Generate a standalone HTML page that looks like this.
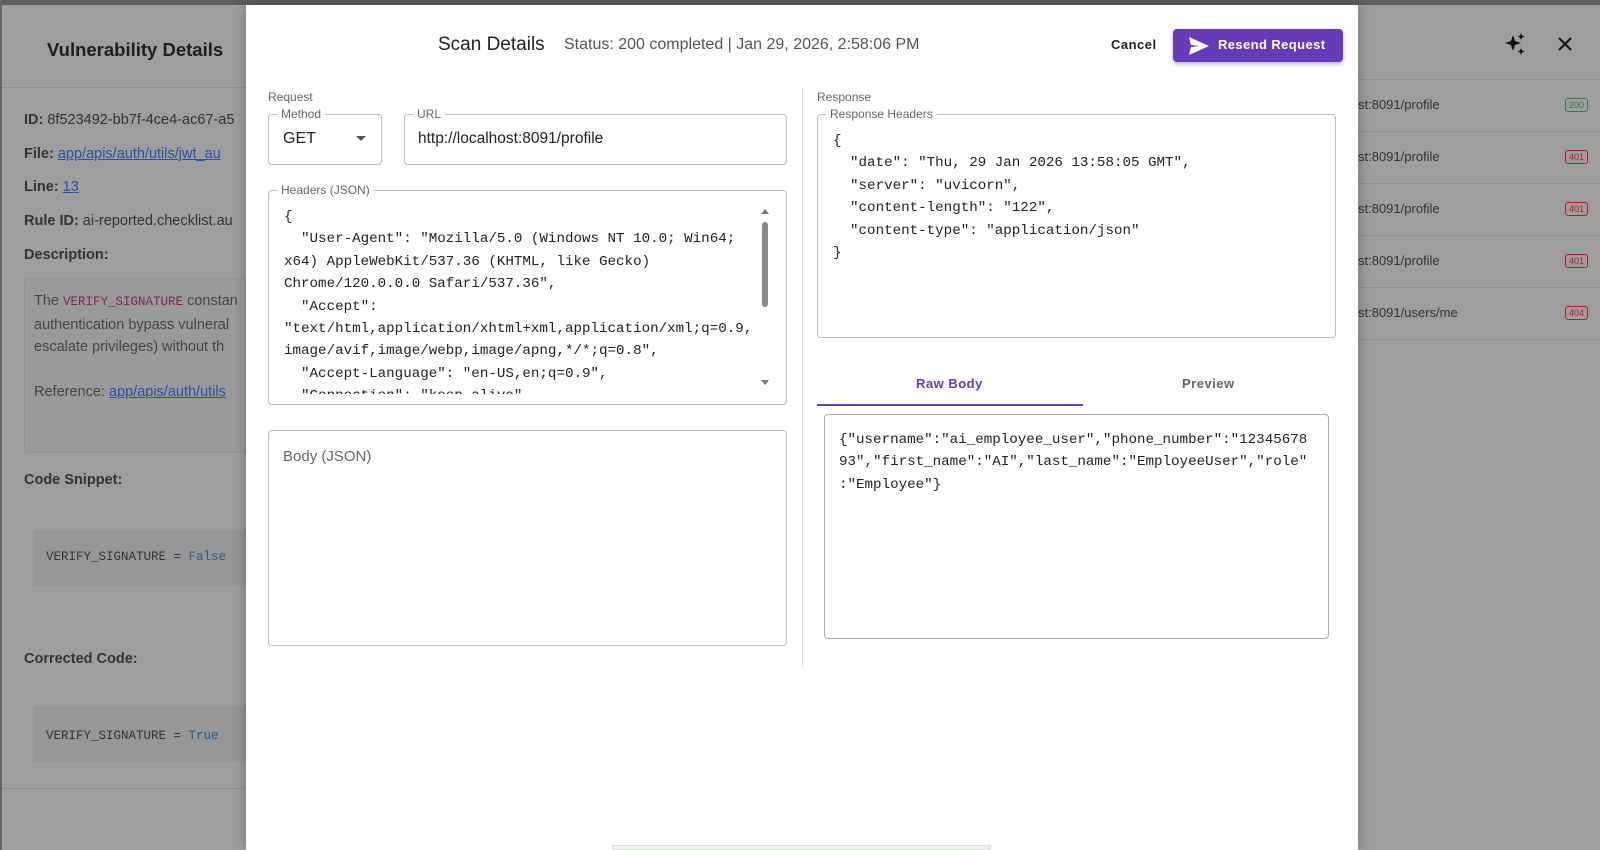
<!DOCTYPE html>
<html><head><style>
*{box-sizing:border-box;margin:0;padding:0}
body{width:1600px;height:850px;overflow:hidden;background:#9e9e9e;font-family:"Liberation Sans",sans-serif;position:relative;color:#222}
.a{position:absolute;white-space:nowrap}
pre.a{white-space:pre}
.mono{font-family:"Liberation Mono",monospace}
.lbl{font-size:12px;color:#666}
.fs{position:absolute;border:1px solid #bdbdbd;border-radius:4px}
.leg{position:absolute;top:-8px;background:#fff;padding:0 4px;font-size:12px;color:#666;z-index:2}
.row{position:absolute;left:1358px;width:242px;border-bottom:1px solid #929292;height:52px}
.bd{position:absolute;right:12px;top:18px;font-size:9px;border:1px solid;border-radius:3px;padding:1px 3px}
</style></head><body>
<div class="a" style="left:0;top:0;width:1600px;height:5px;background:#5e5e5e"></div>
<div class="a" style="left:0;top:0;width:2px;height:850px;background:#666"></div>
<div class="a" style="left:47px;top:39px;font-size:18.5px;font-weight:bold;color:#1e1e1e">Vulnerability Details</div>
<div class="a" style="left:2px;top:87px;width:244px;height:1px;background:#8f8f8f"></div>
<div class="a" style="left:24px;top:112px;font-size:14.5px;color:#333"><b>ID:</b> 8f523492-bb7f-4ce4-ac67-a5</div>
<div class="a" style="left:24px;top:146px;font-size:14.5px;color:#333"><b>File:</b> <span style="color:#2a4fa8;text-decoration:underline">app/apis/auth/utils/jwt_au</span></div>
<div class="a" style="left:24px;top:179px;font-size:14.5px;color:#333"><b>Line:</b> <span style="color:#2a4fa8;text-decoration:underline">13</span></div>
<div class="a" style="left:24px;top:213px;font-size:14.5px;color:#333"><b>Rule ID:</b> ai-reported.checklist.au</div>
<div class="a" style="left:24px;top:247px;font-size:14.5px;color:#333;font-weight:bold">Description:</div>
<div class="a" style="left:24px;top:278px;width:230px;height:175px;border:1px solid #929292;border-radius:4px;background:#9a9a9a"></div>
<div class="a" style="left:34px;top:290px;font-size:14.5px;color:#444;line-height:22.5px">The <span class="mono" style="color:#7a2950;font-size:12.5px">VERIFY_SIGNATURE</span> constan<br>authentication bypass vulneral<br>escalate privileges) without th<br><br>Reference: <span style="color:#2a4fa8;text-decoration:underline">app/apis/auth/utils</span></div>
<div class="a" style="left:24px;top:472px;font-size:14.5px;font-weight:bold;color:#333">Code Snippet:</div>
<div class="a" style="left:34px;top:530px;width:212px;height:56px;background:#979797"></div>
<div class="a mono" style="left:46px;top:550px;font-size:12.5px;color:#333">VERIFY_SIGNATURE = <span style="color:#2c5a82">False</span></div>
<div class="a" style="left:24px;top:651px;font-size:14.5px;font-weight:bold;color:#333">Corrected Code:</div>
<div class="a" style="left:34px;top:706px;width:212px;height:56px;background:#979797"></div>
<div class="a mono" style="left:46px;top:729px;font-size:12.5px;color:#333">VERIFY_SIGNATURE = <span style="color:#2c5a82">True</span></div>
<div class="a" style="left:2px;top:788px;width:244px;height:1px;background:#8f8f8f"></div>

<svg class="a" style="left:1503px;top:32px" width="24" height="24" viewBox="0 0 24 24"><path d="M10 3l2 6 6 2-6 2-2 6-2-6-6-2 6-2z M18 1l1 2.5 2.5 1-2.5 1-1 2.5-1-2.5-2.5-1 2.5-1z M18 16l1 2.5 2.5 1-2.5 1-1 2.5-1-2.5-2.5-1 2.5-1z" fill="#111"/></svg>
<svg class="a" style="left:1557px;top:36px" width="16" height="16"><path d="M2 2L14 14M14 2L2 14" stroke="#111" stroke-width="2"/></svg>
<div class="a" style="left:1358px;top:79px;width:242px;height:1px;background:#929292"></div>
<div class="row" style="top:80px"><span class="a" style="left:0;top:17px;font-size:13px;color:#333">st:8091/profile</span><span class="bd" style="color:#2e7d4f;border-color:#2e7d4f">200</span></div>
<div class="row" style="top:132px"><span class="a" style="left:0;top:17px;font-size:13px;color:#333">st:8091/profile</span><span class="bd" style="color:#b02020;border-color:#b02020">401</span></div>
<div class="row" style="top:184px"><span class="a" style="left:0;top:17px;font-size:13px;color:#333">st:8091/profile</span><span class="bd" style="color:#b02020;border-color:#b02020">401</span></div>
<div class="row" style="top:236px"><span class="a" style="left:0;top:17px;font-size:13px;color:#333">st:8091/profile</span><span class="bd" style="color:#b02020;border-color:#b02020">401</span></div>
<div class="row" style="top:288px"><span class="a" style="left:0;top:17px;font-size:13px;color:#333">st:8091/users/me</span><span class="bd" style="color:#b02020;border-color:#b02020">404</span></div>

<div class="a" style="left:246px;top:5px;width:1112px;height:845px;background:#fff;box-shadow:0 0 12px rgba(0,0,0,.3)"></div>
<div class="a" style="left:438px;top:34px;font-size:19px;color:#222">Scan Details</div>
<div class="a" style="left:564px;top:36px;font-size:16px;color:#555">Status: 200 completed | Jan 29, 2026, 2:58:06 PM</div>
<div class="a" style="left:1111px;top:37px;font-size:13px;font-weight:bold;letter-spacing:.5px;color:#222">Cancel</div>
<div class="a" style="left:1173px;top:29px;width:170px;height:33px;background:#673ab7;border-radius:4px;box-shadow:0 2px 4px rgba(0,0,0,.3)"></div>
<svg class="a" style="left:1188px;top:36px" width="22" height="20" viewBox="0 0 22 20"><path d="M1 1L21 10L1 19L3 11L12 10L3 9Z" fill="#fff"/></svg>
<div class="a" style="left:1218px;top:37px;font-size:13px;font-weight:bold;color:#fff;letter-spacing:.4px">Resend Request</div>

<div class="a lbl" style="left:268px;top:90px">Request</div>
<div class="fs" style="left:268px;top:114px;width:114px;height:51px"><span class="leg" style="left:8px">Method</span></div>
<div class="a" style="left:283px;top:130px;font-size:16px">GET</div>
<svg class="a" style="left:356px;top:136px" width="10" height="6"><path d="M0 0H10L5 5Z" fill="#555"/></svg>
<div class="fs" style="left:404px;top:114px;width:383px;height:51px"><span class="leg" style="left:8px">URL</span></div>
<div class="a" style="left:418px;top:130px;font-size:15.5px">http://localhost:8091/profile</div>
<div class="fs" style="left:268px;top:190px;width:519px;height:215px"><span class="leg" style="left:8px">Headers (JSON)</span>
<div class="a" style="left:0;top:10px;width:517px;height:193px;overflow:hidden">
<pre class="a mono" style="left:15px;top:5px;font-size:14.2px;line-height:22.4px;color:#222">{
  "User-Agent": "Mozilla/5.0 (Windows NT 10.0; Win64;
x64) AppleWebKit/537.36 (KHTML, like Gecko)
Chrome/120.0.0.0 Safari/537.36",
  "Accept":
"text/html,application/xhtml+xml,application/xml;q=0.9,
image/avif,image/webp,image/apng,*/*;q=0.8",
  "Accept-Language": "en-US,en;q=0.9",
  "Connection": "keep-alive",</pre></div>
<svg class="a" style="left:492px;top:18px" width="8" height="6"><path d="M0 5H8L4 0Z" fill="#777"/></svg>
<div class="a" style="left:493px;top:31px;width:6px;height:85px;background:#888;border-radius:3px"></div>
<svg class="a" style="left:492px;top:189px" width="8" height="6"><path d="M0 0H8L4 5Z" fill="#777"/></svg>
</div>
<div class="fs" style="left:268px;top:430px;width:519px;height:216px"></div>
<div class="a" style="left:283px;top:448px;font-size:15px;color:#666">Body (JSON)</div>

<div class="a" style="left:802px;top:87px;width:1px;height:580px;background:#ddd"></div>
<div class="a lbl" style="left:817px;top:90px">Response</div>
<div class="fs" style="left:817px;top:114px;width:519px;height:224px"><span class="leg" style="left:8px">Response Headers</span>
<pre class="a mono" style="left:15px;top:15px;font-size:14.2px;line-height:22.4px;color:#222">{
  "date": "Thu, 29 Jan 2026 13:58:05 GMT",
  "server": "uvicorn",
  "content-length": "122",
  "content-type": "application/json"
}</pre></div>
<div class="a" style="left:916px;top:376px;font-size:13px;font-weight:bold;color:#673ab7;letter-spacing:.5px">Raw Body</div>
<div class="a" style="left:1182px;top:376px;font-size:13px;font-weight:bold;color:#666;letter-spacing:.5px">Preview</div>
<div class="a" style="left:817px;top:404px;width:266px;height:2px;background:#673ab7"></div>
<div class="fs" style="left:824px;top:414px;width:505px;height:225px;border-color:#aaa"></div>
<pre class="a mono" style="left:839px;top:429px;font-size:14.2px;line-height:22.4px;color:#222">{"username":"ai_employee_user","phone_number":"12345678
93","first_name":"AI","last_name":"EmployeeUser","role"
:"Employee"}</pre>
<div class="a" style="left:612px;top:845px;width:379px;height:5px;background:#eaf6ea;border:1px solid #cde6cd"></div>
</body></html>
